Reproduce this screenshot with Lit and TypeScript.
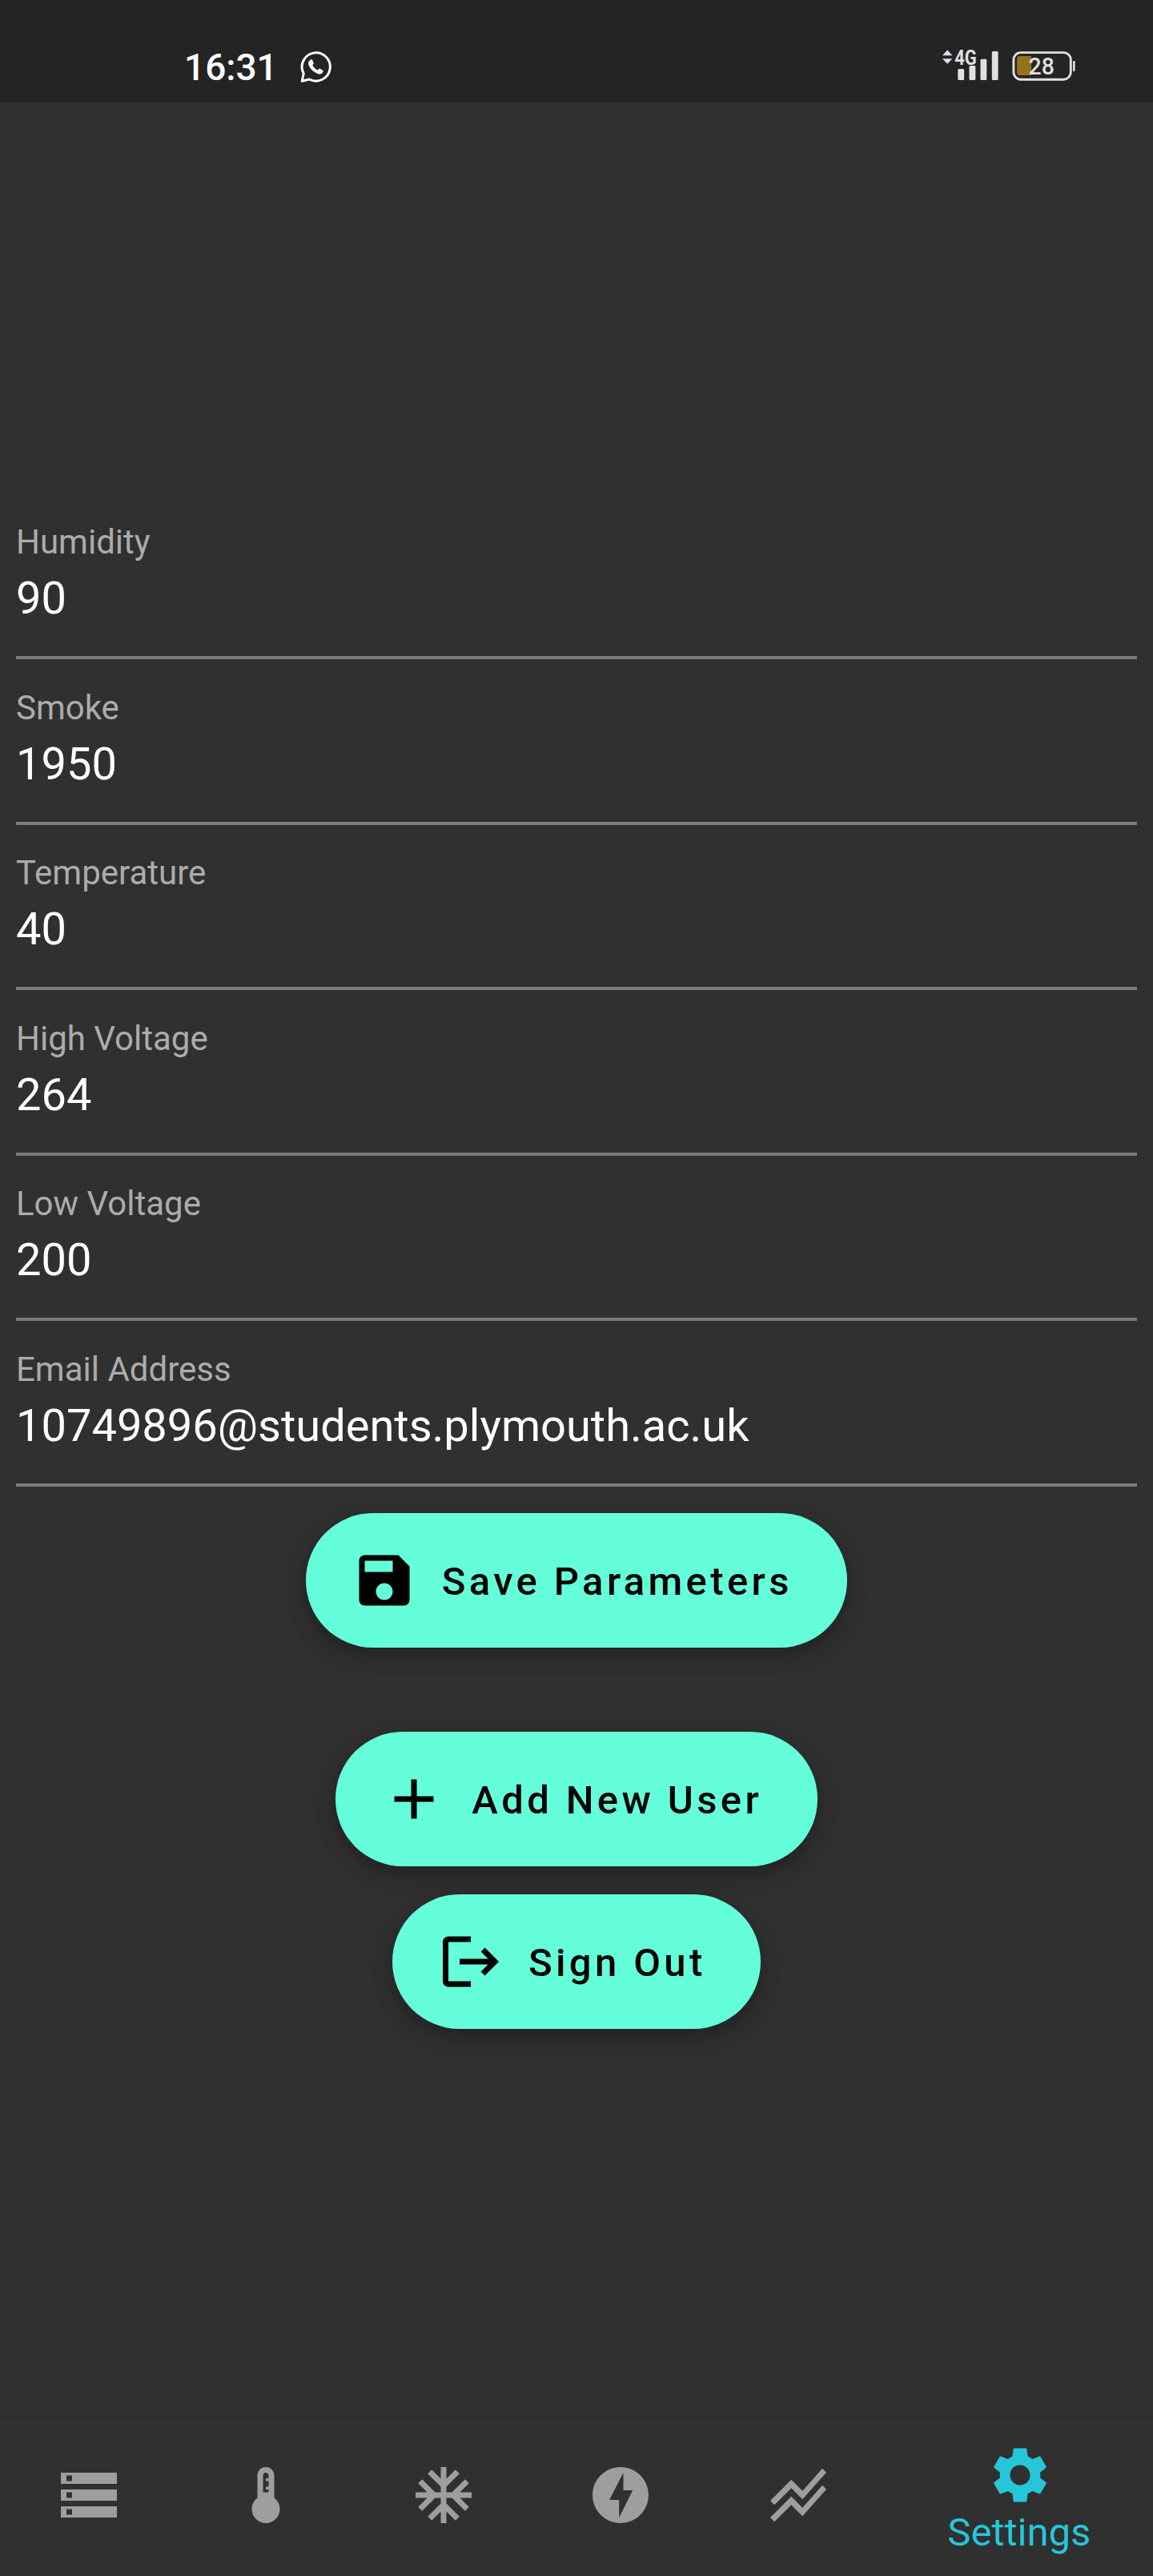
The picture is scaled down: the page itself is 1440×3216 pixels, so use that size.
import { LitElement, html, css, svg } from "lit";
import { customElement, property } from "lit/decorators.js";

const ICONS: Record<string, string> = {
  save: "M17 3H5c-1.11 0-2 .9-2 2v14c0 1.1.89 2 2 2h14c1.1 0 2-.9 2-2V7l-4-4zm-5 16c-1.66 0-3-1.34-3-3s1.34-3 3-3 3 1.34 3 3-1.34 3-3 3zm3-10H5V5h10v4z",
  add: "M19 13h-6v6h-2v-6H5v-2h6V5h2v6h6v2z",
  logout:
    "M17 7l-1.41 1.41L18.17 11H8v2h10.17l-2.58 2.58L17 17l5-5zM4 5h8V3H4c-1.1 0-2 .9-2 2v14c0 1.1.9 2 2 2h8v-2H4V5z",
  storage:
    "M2 20h20v-4H2v4zm2-3h2v2H4v-2zM2 4v4h20V4H2zm4 3H4V5h2v2zm-4 7h20v-4H2v4zm2-3h2v2H4v-2z",
  thermostat:
    "M15 13V5c0-1.66-1.34-3-3-3S9 3.34 9 5v8c-1.21.91-2 2.37-2 4 0 2.76 2.24 5 5 5s5-2.24 5-5c0-1.63-.79-3.09-2-4zm-4-8c0-.55.45-1 1-1s1 .45 1 1v1h-1v1h1v2h-1v1h1v1h-2V5z",
  snow: "M22 11h-4.17l3.24-3.24-1.41-1.42L15 11h-2V9l4.66-4.66-1.42-1.41L13 6.17V2h-2v4.17L7.76 2.93 6.34 4.34 11 9v2H9L4.34 6.34 2.93 7.76 6.17 11H2v2h4.17l-3.24 3.24 1.41 1.42L9 13h2v2l-4.66 4.66 1.42 1.41L11 17.83V22h2v-4.17l3.24 3.24 1.42-1.41L13 15v-2h2l4.66 4.66 1.41-1.42L17.83 13H22z",
  bolt: "M12 2.02c-5.51 0-9.98 4.47-9.98 9.98s4.47 9.98 9.98 9.98 9.98-4.47 9.98-9.98S17.51 2.02 12 2.02zM11.48 20v-6.26H8L13 4v6.26h3.35L11.48 20z",
  chart:
    "M2 19.99l7.5-7.51 4 4 7.09-7.97L22 9.92l-8.5 9.56-4-4-6 6.01-1.5-1.5zm1.5-4.5l6-6.01 4 4L22 3.92l-1.41-1.41-7.09 7.97-4-4L2 13.99l1.5 1.5z",
  settings:
    "M19.14 12.94c.04-.3.06-.61.06-.94 0-.32-.02-.64-.07-.94l2.03-1.58c.18-.14.23-.41.12-.61l-1.92-3.32c-.12-.22-.37-.29-.59-.22l-2.39.96c-.5-.38-1.03-.7-1.62-.94l-.36-2.54c-.04-.24-.24-.41-.48-.41h-3.84c-.24 0-.43.17-.47.41l-.36 2.54c-.59.24-1.13.57-1.62.94l-2.39-.96c-.22-.08-.47 0-.59.22L2.74 8.87c-.12.21-.08.47.12.61l2.03 1.58c-.05.3-.09.63-.09.94s.02.64.07.94l-2.03 1.58c-.18.14-.23.41-.12.61l1.92 3.32c.12.22.37.29.59.22l2.39-.96c.5.38 1.03.7 1.62.94l.36 2.54c.05.24.24.41.48.41h3.84c.24 0 .44-.17.47-.41l.36-2.54c.59-.24 1.13-.56 1.62-.94l2.39.96c.22.08.47 0 .59-.22l1.92-3.32c.12-.22.07-.47-.12-.61l-2.01-1.58zM12 15.6c-1.98 0-3.6-1.62-3.6-3.6s1.62-3.6 3.6-3.6 3.6 1.62 3.6 3.6-1.62 3.6-3.6 3.6z",
};

@customElement("md-icon")
class MdIcon extends LitElement {
  @property() name = "";
  static styles = css`
    :host { display: block; width: 84px; height: 84px; flex: none; }
    .glyph { display: block; width: 100%; height: 100%; fill: currentColor; }
  `;
  render() {
    return html`<svg class="glyph" viewBox="0 0 24 24">${svg`<path d=${ICONS[this.name]}></path>`}</svg>`;
  }
}

@customElement("status-bar")
class StatusBar extends LitElement {
  static styles = css`
    :host { display: block; }
    .bar {
      box-sizing: border-box; height: 128px; background: #242424;
      display: flex; align-items: flex-start; padding: 56px 97px 0 230px;
    }
    .time { font-size: 46px; line-height: 56px; font-weight: 500; color: #fff; width: 145px; }
    .chat { display: block; width: 40px; height: 40px; margin-top: 7px; }
    .spacer { flex: 1; }
    .signal { display: block; width: 72px; height: 40px; margin-top: 5px; overflow: visible; }
    .battery { display: block; width: 80px; height: 38px; margin: 7px 0 0 14px; overflow: visible; }
  `;
  render() {
    return html`<div class="bar">
      <span class="time">16:31</span>
      <svg class="chat" viewBox="0 0 40 40">
        <path d="M2.2 38.2 L4.2 28.8 A17.6 17.6 0 1 1 11.4 36 Z" fill="none" stroke="#fff" stroke-width="3" stroke-linejoin="round"></path>
        <path d="M12.8 11.6 C10 13.4 9.4 16.4 10.8 19 C13.6 24.4 17.4 27.8 22.8 29.4 C25.6 30 28.4 28.4 28.8 25.2 L24.4 22.6 C23.4 22.4 22.6 24.6 21.4 24.4 C18.8 23.4 16.4 20.8 15.4 18.6 C15.4 17.6 17 16.8 16.8 15.8 L15 11.8 C14.6 11.2 13.6 11.2 12.8 11.6 Z" fill="#fff"></path>
      </svg>
      <span class="spacer"></span>
      <svg class="signal" viewBox="0 0 72 40" fill="#e0e0e0">
        <path d="M0 8.3 L6.2 1.6 L12.4 8.3 Z M0 12.3 H12.4 L6.2 18.8 Z"></path>
        <text x="15.2" y="19.6" font-size="25" font-weight="700" textLength="27.6" lengthAdjust="spacingAndGlyphs">4G</text>
        <rect x="19.3" y="25" width="7.8" height="14" rx="1.5"></rect>
        <rect x="33.5" y="21" width="7.8" height="18" rx="1.5"></rect>
        <rect x="47.5" y="12.7" width="7.8" height="26.3" rx="1.5"></rect>
        <rect x="61.8" y="3" width="7.8" height="36" rx="1.5"></rect>
      </svg>
      <svg class="battery" viewBox="0 0 80 38">
        <rect x="2.9" y="2.6" width="71.4" height="33.6" rx="9" fill="none" stroke="#e0e0e0" stroke-width="2.9"></rect>
        <path d="M25 7 H10.5 Q7 7 7 10.5 V27.5 Q7 31 10.5 31 H25 Z" fill="#95721a"></path>
        <rect x="77" y="13" width="2.6" height="13" rx="1" fill="#e0e0e0"></rect>
        <text x="21.6" y="30.2" font-size="29.5" font-weight="500" fill="#e0e0e0" textLength="32.3" lengthAdjust="spacingAndGlyphs">28</text>
      </svg>
    </div>`;
  }
}

@customElement("param-field")
class ParamField extends LitElement {
  @property() label = "";
  @property() value = "";
  static styles = css`
    :host { display: block; }
    .field { height: 206.5px; box-sizing: border-box; padding-top: 35.5px; display: flex; flex-direction: column; }
    .label { font-size: 42px; line-height: 50px; color: #acacac; }
    .value { font-size: 56px; line-height: 66px; color: #fff; margin-top: 12px; }
    .rule { margin-top: auto; height: 4px; background: #7b7b7b; }
  `;
  render() {
    return html`<div class="field">
      <div class="label">${this.label}</div>
      <div class="value">${this.value}</div>
      <div class="rule"></div>
    </div>`;
  }
}

@customElement("pill-button")
class PillButton extends LitElement {
  @property() icon = "";
  @property() label = "";
  static styles = css`
    :host { display: block; }
    .pill {
      display: flex; align-items: center; gap: 28px; box-sizing: border-box; height: 168px;
      padding: 0 68.5px 0 56px; border-radius: 84px; background: #64ffda; color: #000;
      font-size: 49px; font-weight: 500; letter-spacing: 4.375px; white-space: nowrap;
      box-shadow: 0 12px 24px rgba(0, 0, 0, 0.22), 0 4px 36px rgba(0, 0, 0, 0.08);
    }
    .text { padding: 3px 0 0 2px; }
  `;
  render() {
    return html`<div class="pill"><md-icon name=${this.icon}></md-icon><span class="text">${this.label}</span></div>`;
  }
}

@customElement("app-root")
class AppRoot extends LitElement {
  static styles = css`
    :host { display: block; font-family: Roboto, "Liberation Sans", sans-serif; }
    .page { display: flex; flex-direction: column; height: 3216px; background: #303030; overflow: hidden; }
    .content { flex: 1; display: flex; flex-direction: column; padding: 488.7px 20px 0; }
    .actions { display: flex; flex-direction: column; align-items: center; margin-top: 33px; }
    .add { margin-top: 105px; }
    .out { margin-top: 35px; }
    .nav {
      height: 196px; display: flex; background: #303030; color: #9e9e9e;
      box-shadow: 0 -1px 3px rgba(0, 0, 0, 0.12);
    }
    .item { flex: 1; display: flex; flex-direction: column; align-items: center; padding-top: 53px; }
    .active { flex: 1.5; padding-top: 28px; color: #26c6da; }
    .caption { font-size: 49px; line-height: 58px; margin: 1px 2px 0 0; }
  `;
  private fields = [
    ["Humidity", "90"],
    ["Smoke", "1950"],
    ["Temperature", "40"],
    ["High Voltage", "264"],
    ["Low Voltage", "200"],
    ["Email Address", "10749896@students.plymouth.ac.uk"],
  ];
  private tabs = ["storage", "thermostat", "snow", "bolt", "chart"];
  render() {
    return html`<div class="page">
      <status-bar></status-bar>
      <main class="content">
        ${this.fields.map(([l, v]) => html`<param-field label=${l} value=${v}></param-field>`)}
        <div class="actions">
          <pill-button icon="save" label="Save Parameters"></pill-button>
          <pill-button class="add" icon="add" label="Add New User"></pill-button>
          <pill-button class="out" icon="logout" label="Sign Out"></pill-button>
        </div>
      </main>
      <nav class="nav">
        ${this.tabs.map((t) => html`<div class="item"><md-icon name=${t}></md-icon></div>`)}
        <div class="item active"><md-icon name="settings"></md-icon><span class="caption">Settings</span></div>
      </nav>
    </div>`;
  }
}
